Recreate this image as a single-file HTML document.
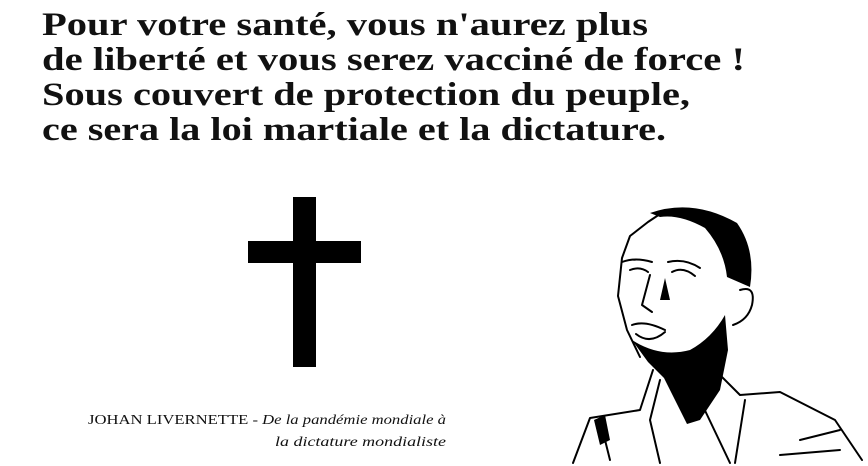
<!DOCTYPE html>
<html><head><meta charset="utf-8"><style>
html,body{margin:0;padding:0;background:#fff;width:868px;height:466px;overflow:hidden}
svg{display:block}
</style></head><body>
<svg width="868" height="466" viewBox="0 0 868 466" xmlns="http://www.w3.org/2000/svg">
<rect width="868" height="466" fill="#fff"/>
<g font-family="Liberation Serif, serif" font-weight="bold" font-size="33" fill="#111">
<text x="42" y="35" textLength="606" lengthAdjust="spacingAndGlyphs">Pour votre santé, vous n'aurez plus</text>
<text x="42" y="70" textLength="703" lengthAdjust="spacingAndGlyphs">de liberté et vous serez vacciné de force !</text>
<text x="42" y="105" textLength="648" lengthAdjust="spacingAndGlyphs">Sous couvert de protection du peuple,</text>
<text x="42" y="140" textLength="624" lengthAdjust="spacingAndGlyphs">ce sera la loi martiale et la dictature.</text>
</g>
<rect x="293" y="197" width="23" height="170" fill="#000"/>
<rect x="248" y="241" width="113" height="22" fill="#000"/>
<g font-family="Liberation Serif, serif" font-size="14" fill="#111">
<text x="88" y="424" textLength="358" lengthAdjust="spacingAndGlyphs">JOHAN LIVERNETTE - <tspan font-style="italic">De la pandémie mondiale à</tspan></text>
<text x="275" y="446" font-style="italic" textLength="171" lengthAdjust="spacingAndGlyphs">la dictature mondialiste</text>
</g>
<g stroke="#000" fill="none" stroke-width="2" stroke-linecap="round" stroke-linejoin="round">
<path d="M660 214 L648 222 L630 236 L622 258 L618 296 L627 330 L640 357"/>
<path d="M622 262 Q635 257 652 262"/><path d="M668 262 Q685 258 700 268"/>
<path d="M630 270 Q640 266 648 272"/><path d="M672 272 Q683 266 695 276"/>
<path d="M650 275 L642 305 L652 312"/>
<path d="M632 325 Q645 320 665 330"/><path d="M636 334 Q650 345 665 332"/>
<path d="M740 290 Q756 285 752 305 Q748 320 733 325"/>
<path d="M653 370 L640 410 L590 418 L573 463"/>
<path d="M717 372 L740 395 L780 392 L835 420 L862 460"/>
<path d="M660 380 L650 420 L660 463"/><path d="M700 400 L730 463"/>
<path d="M745 400 L735 463"/><path d="M600 420 L610 460"/>
<path d="M800 440 L840 430"/><path d="M780 455 L840 450"/>
</g>
<path fill="#000" d="M650 213 Q693 198 737 223 Q756 250 750 287 L727 277 Q724 250 705 228 Q680 214 660 217 Z"/>
<path fill="#000" d="M632 340 Q660 358 690 350 Q712 338 725 315 L728 350 L720 390 L700 420 L687 424 L675 400 L664 378 L648 362 Z"/>
<path fill="#000" d="M665 278 L660 300 L670 300 Z"/>
<path fill="#000" d="M594 420 L605 415 L610 440 L600 445 Z"/>
</svg>
</body></html>
